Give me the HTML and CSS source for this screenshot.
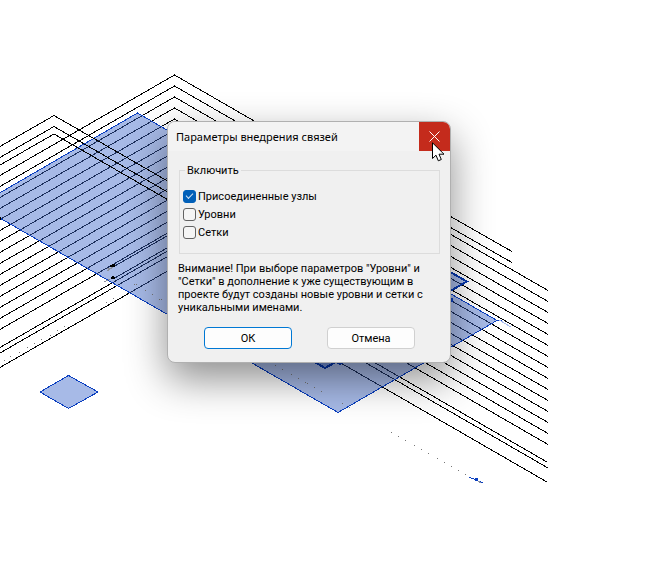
FILE: index.html
```
<!DOCTYPE html>
<html lang="ru">
<head>
<meta charset="utf-8">
<title>Параметры внедрения связей</title>
<link rel="stylesheet" href="styles.css">
</head>
<body>
<main class="workspace">
  <svg class="scene" width="654" height="583" viewBox="0 0 654 583" aria-hidden="true">
    <g class="edge">
      <path d="M0 175.5L174.500 75L548 290.500"/>
      <path d="M0 186.500L174.500 86L548 301.500"/>
      <path d="M0 197.500L174.500 97L548 312.500"/>
      <path d="M0 208.500L174.500 108L548 323.500"/>
      <path d="M0 219.500L174.500 119L548 334.500"/>
      <path d="M0 230.500L174.500 130L548 345.500"/>
      <path d="M0 241.500L174.500 141L548 356.500"/>
      <path d="M0 252.500L174.500 152L548 367.500"/>
      <path d="M0 263.500L174.500 163L548 378.500"/>
      <path d="M0 274.500L174.500 174L548 389.500"/>
      <path d="M0 285.500L174.500 185L548 400.500"/>
      <path d="M0 296.500L174.500 196L548 411.500"/>
      <path d="M0 307.500L174.500 207L548 422.500"/>
      <path d="M0 318.500L174.500 218L548 433.500"/>
      <path d="M0 329.500L174.500 229L548 444.500"/>
      <path d="M0 347.500L174.500 247L547 462"/>
      <path d="M0 353L174.500 252.500L548 468"/>
      <path d="M0 367.500L174.500 267L547 482"/>
      <path d="M440 210.500L512 251.500M440 221.500L512 262.500M113 267L174 232M113 279L174 244"/>
    </g>
    <path class="face" d="M-22 205.500L137.500 113L497 320.500L338 412.500Z"/>
    <path class="face" d="M40 392L68.500 375.500L98 392L68.500 408.500Z"/>
    <path class="edge" d="M0 146.500L54 115.500L190 194M0 157.500L54 126.500L190 205M0 165L54 134L190 212.500"/>
    <path class="face heavy" d="M430 260.500L467 281.500L430 302.500Z"/>
    <path class="face heavy" d="M308 358L325 368L336 362L340 364L348 360Z"/>
    <path class="mark" d="M450 298h3v4h-3zM475 478h3v3h-3z"/>
    <path class="accent" d="M469 477L483 483M496 320h6"/>
    <path class="pale" d="M499 320L511 327"/>
    <path class="knot" d="M110 266h5M112 265h3M111 278h4M112 277h2M0 217v2"/>
    <path class="trail" d="M107 271L113 267M107 269L110 268M104 282L110 279M478 481l3 2"/>
    <path class="dots" d="M4 360h1M10 356h1M19 352h1M27 347h1M34 343h1M41 339h1M50 335h1M57 330h1M64 326h1M106 302h1M113 298h1M134 284h1M136 284h1M145 290h1M152 294h1M159 299h1M161 299h1M275 365h1M282 369h1M291 374h1M298 378h1M305 382h1M307 383h1M314 387h1M321 391h1M342 403h1M349 407h1M391 432h1M398 436h1M405 440h1M414 445h1M421 449h1M428 453h1M437 458h1M444 462h1M451 466h1M458 470h1M465 474h1"/>
  </svg>

  <form class="dialog" role="dialog" aria-labelledby="dialog-title">
    <header class="titlebar">
      <h1 class="title" id="dialog-title">Параметры внедрения связей</h1>
      <button class="close" type="button" aria-label="Закрыть">
        <svg width="11" height="11" viewBox="0 0 11 11"><path d="M.5.5l10 10M10.500.5l-10 10"/></svg>
      </button>
    </header>
    <div class="content">
      <fieldset class="group">
        <legend>Включить</legend>
        <label class="option"><input type="checkbox" checked>Присоединенные узлы</label>
        <label class="option"><input type="checkbox">Уровни</label>
        <label class="option"><input type="checkbox">Сетки</label>
      </fieldset>
      <p class="warning">Внимание! При выборе параметров "Уровни" и<br>"Сетки" в дополнение к уже существующим в<br>проекте будут созданы новые уровни и сетки с<br>уникальными именами.</p>
      <div class="actions">
        <button class="button primary" type="submit">ОК</button>
        <button class="button" type="button">Отмена</button>
      </div>
    </div>
  </form>

  <svg class="cursor" width="13" height="20" viewBox="0 0 13 20" aria-hidden="true">
    <path d="M.5.8V16.500L4 13.200L6.300 18.800L9.300 17.500L7 12.200H12Z"/>
  </svg>
</main>
</body>
</html>
```
FILE: styles.css
```
* { box-sizing: border-box; }

body {
  margin: 0;
  background: #fff;
  color: #000;
  font: 11px/13px Roboto, "Liberation Sans", sans-serif;
}

.workspace {
  position: relative;
  min-height: 100vh;
  overflow: hidden;
}

.scene {
  display: block;
  shape-rendering: crispEdges;
}

.edge { fill: none; stroke: #000; }
.face { fill: #3b66ca; fill-opacity: .45; stroke: #0a3fc0; }
.heavy { stroke: #0537ad; stroke-width: 2; }
.mark { fill: #0a3fc0; }
.accent { fill: none; stroke: #0a3fc0; }
.pale { fill: none; stroke: #a9bdf0; }
.knot { stroke: #000; stroke-width: 2; }
.trail { stroke: #8a8f9c; }
.dots { stroke: #777; }

.dialog {
  position: absolute;
  left: 167px;
  top: 121px;
  width: 284px;
  border: 1px solid #b0b0b0;
  border-radius: 8px;
  background: #f0f0f0;
  overflow: hidden;
  box-shadow: 0 16px 40px rgba(0, 0, 0, .45);
}

.titlebar {
  display: flex;
  align-items: stretch;
  justify-content: space-between;
  height: 29px;
  padding-left: 8px;
  background: #f3f3f3;
}

.title {
  margin: 0;
  font: 400 11px/30px "Noto Sans", "Open Sans", sans-serif;
}

.close {
  display: grid;
  place-items: center;
  width: 31px;
  padding: 0;
  border: 0;
  background: #c42b1c;
}

.close path { fill: none; stroke: #fff; }

.content { padding: 13px 10px; }

.group {
  display: flex;
  flex-direction: column;
  gap: 4px;
  height: 90px;
  margin: 0 0 0 1px;
  padding: 12px 3px;
  border: 1px solid #dcdcdc;
}

.group legend {
  margin-left: 2px;
  padding: 0 2px;
}

.option {
  display: flex;
  align-items: center;
  gap: 2px;
  height: 14px;
}

.option input {
  appearance: none;
  width: 13px;
  height: 13px;
  margin: 0;
  border: 1px solid #626262;
  border-radius: 3px;
  background: #f5f5f5;
}

.option input:checked {
  display: grid;
  place-items: center;
  border-color: #005fb8;
  background: #005fb8;
}

.option input:checked::before {
  content: "";
  width: 6px;
  height: 3px;
  margin-bottom: 2px;
  border: solid #cfe2f5;
  border-width: 0 0 1px 1px;
  transform: rotate(-45deg);
}

.warning {
  margin: 8px 0 13px;
  white-space: nowrap;
}

.actions {
  display: flex;
  justify-content: space-between;
  padding: 0 25px 0 26px;
}

.button {
  width: 88px;
  height: 22px;
  padding: 0;
  border: 1px solid #d0d0d0;
  border-radius: 4px;
  background: #fdfdfd;
  color: #000;
  font: inherit;
}

.primary { border-color: #0078d4; }

.cursor {
  position: absolute;
  left: 432px;
  top: 142px;
}

.cursor path { fill: #fff; stroke: #000; }
```
